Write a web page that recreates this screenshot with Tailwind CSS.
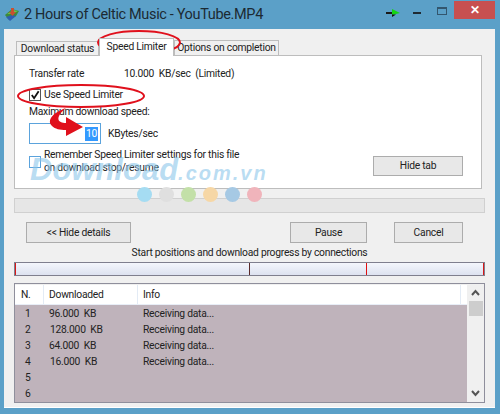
<!DOCTYPE html>
<html lang="en">
  <head>
    <meta charset="UTF-8" />
    <title>2 Hours of Celtic Music - YouTube.MP4</title>
    <script src="https://cdn.jsdelivr.net/npm/@tailwindcss/browser@4"></script>
  </head>
  <body class="bg-[#5ba0c8]">
    <div class="relative w-[500px] h-[414px] overflow-hidden bg-[#5ba0c8] font-['Roboto',sans-serif] text-[10.3px] tracking-[-0.25px] leading-[14px] text-[#222]">
      <!-- title bar -->
      <div class="flex h-[29px] items-start">
        <svg class="ml-[4px] mt-[6px] w-[17px] h-[17px] shrink-0" viewBox="0 0 17 17">
          <path d="M1 9 L8 3 L15 5 L12 10 L5 14 Z" fill="#3d8a3a" />
          <path d="M3 8 L9 4 L14 5 L8 8 Z" fill="#6fbf4a" />
          <path d="M2 11 L8 9 L12 10 L6 15 Z" fill="#2f5fb0" />
          <path d="M7 2 L10 2 L10 6 L12 6 L8.5 10 L5 6 L7 6 Z" fill="#c9502f" />
        </svg>
        <div class="ml-[3px] mt-[5px] whitespace-nowrap text-[14.5px] tracking-[-0.35px] leading-[20px] text-[#1c2a33]">2 Hours of Celtic Music - YouTube.MP4</div>
        <div class="ml-auto mr-[5px] flex items-start">
          <svg class="mt-[8px] w-[14px] h-[10px]" viewBox="0 0 14 10">
            <rect x="0" y="4" width="6" height="2" fill="#1a1a1a" />
            <path d="M6 1 L14 5 L6 7 Z" fill="#14d414" />
            <path d="M6 6.5 L10 6.5 L6 9 Z" fill="#111" />
          </svg>
          <div class="ml-[13px] mt-[12px] w-[8px] h-[2px] bg-[#1f2a33]"></div>
          <div class="ml-[16px] mt-[7px] w-[10px] h-[8px] border border-[#33566e] border-t-2"></div>
          <div class="ml-[7px] mt-[1px] w-[41px] h-[18px] bg-[#c75050] flex items-center justify-center text-white text-[12px] font-bold">✕</div>
        </div>
      </div>

      <!-- window body -->
      <div class="ml-[4px] w-[491px] h-[379px] bg-[#f0f0f0] border-b border-white flex flex-col px-[10px]">
        <!-- tabs -->
        <div class="flex items-end h-[26px] pl-[2px] whitespace-nowrap">
          <div class="w-[83px] h-[14px] border border-b-0 border-[#bdbdbd] bg-[#f0f0f0] text-center leading-[13px]">Download status</div>
          <div class="w-[75px] h-[18px] border border-b-0 border-[#bdbdbd] bg-white text-center leading-[15px] relative top-[1px] z-10">Speed Limiter</div>
          <div class="w-[105px] h-[15px] border border-b-0 border-[#bdbdbd] bg-[#f0f0f0] text-center leading-[14px]">Options on completion</div>
        </div>
        <!-- tab panel -->
        <div class="w-[468px] h-[134px] border border-[#bdbdbd] bg-white pl-[14px] pt-[11px] relative">
          <div class="flex">
            <span class="w-[95px]">Transfer rate</span>
            <span>10.000&nbsp; KB/sec&nbsp; (Limited)</span>
          </div>
          <div class="flex items-center mt-[7px] h-[14px]">
            <div class="w-[12px] h-[12px] border border-[#555] bg-white flex items-center justify-center">
              <svg class="w-[10px] h-[10px]" viewBox="0 0 11 11"><path d="M2 5.5 L4.5 9 L9.5 1.5" fill="none" stroke="#111" stroke-width="2" /></svg>
            </div>
            <span class="ml-[3px]">Use Speed Limiter</span>
          </div>
          <div class="mt-[3px]">Maximum download speed:</div>
          <div class="flex items-center mt-[4px]">
            <div class="w-[72px] h-[21px] border border-[#5ba3dc] bg-white flex items-center justify-end pr-[2px]">
              <span class="bg-[#3399ff] text-white px-[1px]">10</span>
            </div>
            <span class="ml-[7px]">KBytes/sec</span>
          </div>
          <div class="flex items-center mt-[5px]">
            <div class="w-[12px] h-[12px] border-[1.5px] border-[#5ba3dc] bg-white"></div>
            <div class="ml-[3px] leading-[12.5px]">Remember Speed Limiter settings for this file<br />on download stop/resume</div>
          </div>
          <div class="absolute left-[358px] top-[100px] w-[90px] h-[20px] border border-[#acacac] bg-[#e8e8e8] flex items-center justify-center">Hide tab</div>
        </div>
        <!-- overall progress -->
        <div class="w-[471px] h-[15px] mt-[9px] border border-[#d0d0d0] bg-[#e6e6e6]"></div>
        <!-- buttons -->
        <div class="flex mt-[9px] pl-[12px]">
          <div class="w-[105px] h-[21px] border border-[#acacac] bg-[#e8e8e8] flex items-center justify-center">&lt;&lt; Hide details</div>
          <div class="ml-[159px] w-[77px] h-[21px] border border-[#acacac] bg-[#e8e8e8] flex items-center justify-center">Pause</div>
          <div class="ml-[27px] w-[69px] h-[21px] border border-[#acacac] bg-[#e8e8e8] flex items-center justify-center">Cancel</div>
        </div>
        <div class="w-[471px] text-center mt-[3px] h-[15px]">Start positions and download progress by connections</div>
        <!-- connection bar -->
        <div class="relative w-[471px] h-[14px] mt-[1px] border border-[#7f7f8e] bg-gradient-to-b from-[#f4f6fc] to-[#dde2f0]">
          <div class="absolute left-0 top-0 w-[1px] h-full bg-[#d81818]"></div>
          <div class="absolute left-[234px] top-0 w-[1px] h-full bg-[#5a2a2a]"></div>
          <div class="absolute left-[351px] top-0 w-[1px] h-full bg-[#e01010]"></div>
          <div class="absolute right-0 top-0 w-[1px] h-full bg-[#d81818]"></div>
        </div>
        <!-- connections list -->
        <div class="flex w-[471px] h-[120px] mt-[7px] border border-[#8f8f9c] bg-[#f0f0f0]">
          <div class="flex-1 flex flex-col pt-[1px]">
            <div class="flex h-[22px] bg-white border-b border-[#e8eef7] items-center">
              <span class="w-[29px] pl-[6px] border-r border-[#e3ebf5] h-full flex items-center">N.</span>
              <span class="w-[94px] pl-[5px] border-r border-[#e3ebf5] h-full flex items-center">Downloaded</span>
              <span class="w-[323px] pl-[5px] border-r border-[#e3ebf5] h-full flex items-center">Info</span>
            </div>
            <div class="flex-1 bg-[#bfb3bb] pt-[1px]">
              <div class="flex h-[16px] items-center"><span class="w-[29px] pl-[10px]">1</span><span class="w-[94px] pl-[5px]">96.000&nbsp; KB</span><span class="pl-[5px]">Receiving data...</span></div>
              <div class="flex h-[16px] items-center"><span class="w-[29px] pl-[10px]">2</span><span class="w-[94px] pl-[6px]">128.000&nbsp; KB</span><span class="pl-[5px]">Receiving data...</span></div>
              <div class="flex h-[16px] items-center"><span class="w-[29px] pl-[10px]">3</span><span class="w-[94px] pl-[5px]">64.000&nbsp; KB</span><span class="pl-[5px]">Receiving data...</span></div>
              <div class="flex h-[16px] items-center"><span class="w-[29px] pl-[10px]">4</span><span class="w-[94px] pl-[6px]">16.000&nbsp; KB</span><span class="pl-[5px]">Receiving data...</span></div>
              <div class="flex h-[16px] items-center"><span class="w-[29px] pl-[10px]">5</span></div>
              <div class="flex h-[16px] items-center"><span class="w-[29px] pl-[10px]">6</span></div>
            </div>
          </div>
          <!-- scrollbar -->
          <div class="w-[17px] flex flex-col items-center bg-[#f0f0f0]">
            <svg class="mt-[5px] w-[9px] h-[7px]" viewBox="0 0 9 7"><path d="M1 6 L4.5 2 L8 6" fill="none" stroke="#555" stroke-width="2" /></svg>
            <div class="mt-[5px] w-[14px] h-[15px] bg-[#cdcdcd]"></div>
            <div class="flex-1"></div>
            <svg class="mb-[5px] w-[9px] h-[7px]" viewBox="0 0 9 7"><path d="M1 1 L4.5 5 L8 1" fill="none" stroke="#555" stroke-width="2" /></svg>
          </div>
        </div>
      </div>

      <!-- watermark -->
      <div class="absolute left-[30px] top-[155px] whitespace-nowrap font-['Liberation_Sans',sans-serif] font-bold italic text-[31px] tracking-[0px] leading-[30px] text-[#8cc6ea]/60">Download<span class="text-[20px] tracking-[2px]">.com.vn</span></div>
      <div class="absolute left-[137px] top-[187px] flex gap-[7px]">
        <div class="w-[15px] h-[15px] rounded-full bg-[#a5dcf2]"></div>
        <div class="w-[15px] h-[15px] rounded-full bg-[#dfdfdf]"></div>
        <div class="w-[15px] h-[15px] rounded-full bg-[#c3e0a8]"></div>
        <div class="w-[15px] h-[15px] rounded-full bg-[#f6d7a6]"></div>
        <div class="w-[15px] h-[15px] rounded-full bg-[#a6c9e4]"></div>
        <div class="w-[15px] h-[15px] rounded-full bg-[#f0b4bb]"></div>
      </div>

      <!-- red annotations -->
      <svg class="absolute left-0 top-0 w-[500px] h-[414px] pointer-events-none" viewBox="0 0 500 414">
        <ellipse cx="139" cy="42.5" rx="41" ry="11.5" fill="none" stroke="#e0101c" stroke-width="2" />
        <ellipse cx="81" cy="96" rx="63" ry="11" fill="none" stroke="#e0101c" stroke-width="2" />
        <path d="M66 108 C54 112 46 120 52 126 C55 129 60 130 66 130 L66 136 L83 127 L66 117 L66 123 C58 123 54 118 66 108 Z" fill="#e0101c" />
      </svg>
    </div>
  </body>
</html>
